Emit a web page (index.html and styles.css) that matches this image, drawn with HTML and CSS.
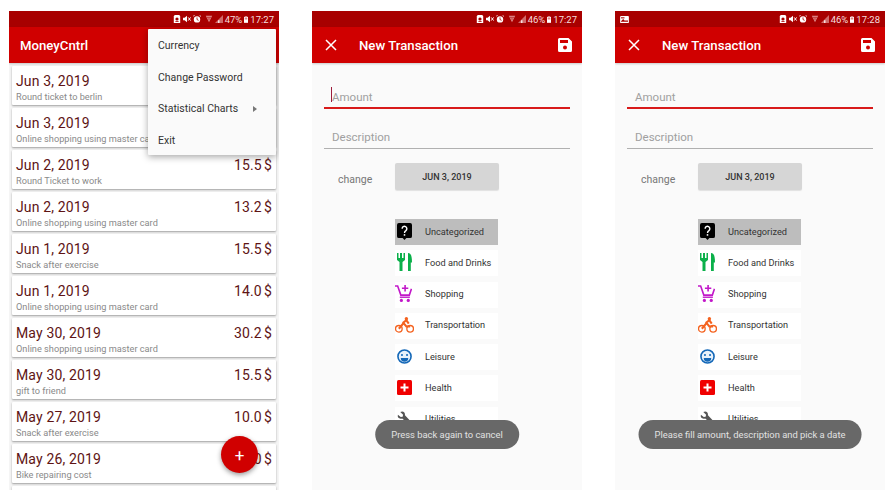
FILE: index.html
```html
<!DOCTYPE html>
<html lang="en">

<head>
    <meta charset="UTF-8">
    <meta name="viewport" content="width=device-width, initial-scale=1.0">
    <title>MoneyCntrl</title>
    <link rel="stylesheet" href="styles.css">
</head>

<body>
    <svg class="defs" width="0" height="0">
        <symbol id="st-lock" viewBox="0 0 10 10"><path d="M2 0h6l1 2v8H1V2z" fill="#fff"/><circle cx="5" cy="5" r="2" fill="#a80000"/><rect x="3" y="7.6" width="4" height="1" fill="#a80000"/></symbol>
        <symbol id="st-mute" viewBox="0 0 10 10"><path d="M0 3.5h2L5 1v8L2 6.500H0z" fill="#fff"/><path d="M6.500 3l3 4M9.500 3l-3 4" stroke="#fff" stroke-width="1.200"/></symbol>
        <symbol id="st-alarm" viewBox="0 0 10 10"><circle cx="5" cy="5.500" r="4" fill="#fff"/><path d="M5 3v2.700l2 1" stroke="#a80000" fill="none"/><path d="M0 2l2-2M10 2L8 0" stroke="#fff"/></symbol>
        <symbol id="st-wifi" viewBox="0 0 10 10"><path d="M1 1h8L5 9z" fill="#e08a8a"/><path d="M2.500 3h5M3.500 5h3" stroke="#a80000" stroke-width=".7"/></symbol>
        <symbol id="st-signal" viewBox="0 0 10 10"><path d="M0 10L10 0v10z" fill="#d06a6a"/><path d="M4 10V6.500h1.500V10z" fill="#fff"/></symbol>
        <symbol id="st-batt" viewBox="0 0 6 10"><rect x="2" width="2" height="1" fill="#fff"/><rect y="1" width="6" height="9" fill="#fff"/><rect x="1" y="2" width="4" height="3" fill="#d88"/></symbol>
        <symbol id="i-close" viewBox="0 0 12 12"><path d="M1 1l10 10M11 1L1 11" stroke="#fff" stroke-width="1.500"/></symbol>
        <symbol id="i-save" viewBox="0 0 14 14"><path d="M1.500 0H10.500L14 3.500V12.500A1.500 1.500 0 0 1 12.500 14H1.500A1.500 1.500 0 0 1 0 12.500V1.500A1.500 1.500 0 0 1 1.500 0z" fill="#fff"/><rect x="2" y="2" width="8" height="3" fill="#d00000"/><circle cx="7" cy="9.500" r="2" fill="#d00000"/></symbol>
        <symbol id="i-help" viewBox="0 0 16 18"><path d="M2 0h12a2 2 0 0 1 2 2v12a2 2 0 0 1-2 2h-4l-2 2-2-2H2a2 2 0 0 1-2-2V2a2 2 0 0 1 2-2z" fill="#000"/><path d="M5.500 6a2.500 2.500 0 1 1 4 2c-1 .7-1.500 1.200-1.500 2.500" fill="none" stroke="#fff" stroke-width="1.500"/><rect x="7.200" y="11.800" width="1.600" height="1.700" fill="#fff"/></symbol>
        <symbol id="i-food" viewBox="0 0 15 18"><path d="M0 0h1.500v5H3V0h2v5h1.500V0H8v7L5.500 9v9h-3V9L0 7z" fill="#0bb04a"/><path d="M11 0c3 0 4 3 4 9.500h-1.200V18H11z" fill="#0bb04a"/></symbol>
        <symbol id="i-cart" viewBox="0 0 16 16"><path d="M0 1h2.500l3 8.500h8l2-6" fill="none" stroke="#c218c9" stroke-width="1.500"/><path d="M9.500 0v6M6.500 3h6" stroke="#c218c9" stroke-width="1.500"/><path d="M4.500 11.500h9.500" stroke="#c218c9" stroke-width="1.300"/><circle cx="6" cy="14.500" r="1.500" fill="#c218c9"/><circle cx="12.500" cy="14.500" r="1.500" fill="#c218c9"/></symbol>
        <symbol id="i-bike" viewBox="0 0 20 17"><circle cx="4" cy="12.500" r="3.500" fill="none" stroke="#f4621f" stroke-width="1.400"/><circle cx="16" cy="12.500" r="3.500" fill="none" stroke="#f4621f" stroke-width="1.400"/><circle cx="12" cy="1.800" r="1.800" fill="#f4621f"/><path d="M4 12.500l5-6 3 3.500h4M8 6.500l4-3 2.500 3.500" fill="none" stroke="#f4621f" stroke-width="2.200"/></symbol>
        <symbol id="i-smile" viewBox="0 0 16 16"><circle cx="8" cy="8" r="7" fill="#e8f2fb" stroke="#1468b8" stroke-width="1.700"/><circle cx="5.300" cy="6.300" r="1.100" fill="#1468b8"/><circle cx="10.700" cy="6.300" r="1.100" fill="#1468b8"/><path d="M4 9.500h8a4 4 0 0 1-8 0z" fill="#1468b8"/></symbol>
        <symbol id="i-health" viewBox="0 0 15 15"><rect width="15" height="15" rx="1.500" fill="#f00000"/><path d="M7.500 3.500v8M3.500 7.500h8" stroke="#fff" stroke-width="2"/></symbol>
        <symbol id="i-wrench" viewBox="0 0 16 16"><path d="M1 4l3 2.500 2-.5.500-2L3.500 1C6-.5 9 1 8.500 4.500L15.500 12l-2.500 2.500-7.500-6.500C2 9 0 6.500 1 4z" fill="#555"/></symbol>
    </svg>

    <!-- transactions list -->
    <section class="phone">
        <div class="status">
            <span class="status-right">
                <svg class="st"><use href="#st-lock"/></svg><svg class="st"><use href="#st-mute"/></svg><svg class="st"><use href="#st-alarm"/></svg><svg class="st st-gap"><use href="#st-wifi"/></svg><svg class="st"><use href="#st-signal"/></svg>
                <span>47%</span><svg class="st-batt"><use href="#st-batt"/></svg><span>17:27</span>
            </span>
        </div>
        <header class="toolbar"><span class="app-title">MoneyCntrl</span></header>
        <div class="list">
            <div class="card"><div class="card-top"><span class="date">Jun 3, 2019</span><span class="amount">15.5 $</span></div><div class="note">Round ticket to berlin</div></div>
            <div class="card"><div class="card-top"><span class="date">Jun 3, 2019</span><span class="amount">15.5 $</span></div><div class="note">Online shopping using master card</div></div>
            <div class="card"><div class="card-top"><span class="date">Jun 2, 2019</span><span class="amount">15.5 $</span></div><div class="note">Round Ticket to work</div></div>
            <div class="card"><div class="card-top"><span class="date">Jun 2, 2019</span><span class="amount">13.2 $</span></div><div class="note">Online shopping using master card</div></div>
            <div class="card"><div class="card-top"><span class="date">Jun 1, 2019</span><span class="amount">15.5 $</span></div><div class="note">Snack after exercise</div></div>
            <div class="card"><div class="card-top"><span class="date">Jun 1, 2019</span><span class="amount">14.0 $</span></div><div class="note">Online shopping using master card</div></div>
            <div class="card"><div class="card-top"><span class="date">May 30, 2019</span><span class="amount">30.2 $</span></div><div class="note">Online shopping using master card</div></div>
            <div class="card"><div class="card-top"><span class="date">May 30, 2019</span><span class="amount">15.5 $</span></div><div class="note">gift to friend</div></div>
            <div class="card"><div class="card-top"><span class="date">May 27, 2019</span><span class="amount">10.0 $</span></div><div class="note">Snack after exercise</div></div>
            <div class="card"><div class="card-top"><span class="date">May 26, 2019</span><span class="amount">15.0 $</span></div><div class="note">Bike repairing cost</div></div>
            <div class="card"></div>
        </div>
        <div class="menu">
            <div class="menu-item">Currency</div>
            <div class="menu-item">Change Password</div>
            <div class="menu-item menu-sub">Statistical Charts<span class="arrow"></span></div>
            <div class="menu-item">Exit</div>
        </div>
        <div class="fab">+</div>
    </section>

    <!-- new transaction, focused amount -->
    <section class="phone phone-form">
        <div class="status">
            <span class="status-right">
                <svg class="st"><use href="#st-lock"/></svg><svg class="st"><use href="#st-mute"/></svg><svg class="st"><use href="#st-alarm"/></svg><svg class="st st-gap"><use href="#st-wifi"/></svg><svg class="st"><use href="#st-signal"/></svg>
                <span>46%</span><svg class="st-batt"><use href="#st-batt"/></svg><span>17:27</span>
            </span>
        </div>
        <header class="toolbar">
            <svg class="close"><use href="#i-close"/></svg>
            <span class="form-title">New Transaction</span>
            <svg class="save"><use href="#i-save"/></svg>
        </header>
        <div class="form">
            <div class="field field-active"><span class="cursor"></span>Amount</div>
            <div class="field">Description</div>
            <div class="date-row"><span class="change">change</span><span class="date-btn">JUN 3, 2019</span></div>
            <div class="cats">
                <div class="cat cat-on"><svg class="cat-icon"><use href="#i-help"/></svg>Uncategorized</div>
                <div class="cat"><svg class="cat-icon icon-food"><use href="#i-food"/></svg>Food and Drinks</div>
                <div class="cat"><svg class="cat-icon icon-cart"><use href="#i-cart"/></svg>Shopping</div>
                <div class="cat"><svg class="cat-icon icon-bike"><use href="#i-bike"/></svg>Transportation</div>
                <div class="cat"><svg class="cat-icon"><use href="#i-smile"/></svg>Leisure</div>
                <div class="cat"><svg class="cat-icon"><use href="#i-health"/></svg>Health</div>
                <div class="cat"><svg class="cat-icon"><use href="#i-wrench"/></svg>Utilities</div>
            </div>
        </div>
        <div class="toast">Press back again to cancel</div>
    </section>

    <!-- new transaction, validation toast -->
    <section class="phone phone-form">
        <div class="status">
            <svg class="st-pic" viewBox="0 0 10 8"><rect width="10" height="8" rx="1" fill="#fff"/><path d="M1 6l2.500-2.500L5 5h4v1.500H1z" fill="#a80000"/><rect x="1" y="1.500" width="4" height="1.200" fill="#a80000"/></svg>
            <span class="status-right">
                <svg class="st"><use href="#st-lock"/></svg><svg class="st"><use href="#st-mute"/></svg><svg class="st"><use href="#st-alarm"/></svg><svg class="st st-gap"><use href="#st-wifi"/></svg><svg class="st"><use href="#st-signal"/></svg>
                <span>46%</span><svg class="st-batt"><use href="#st-batt"/></svg><span>17:28</span>
            </span>
        </div>
        <header class="toolbar">
            <svg class="close"><use href="#i-close"/></svg>
            <span class="form-title">New Transaction</span>
            <svg class="save"><use href="#i-save"/></svg>
        </header>
        <div class="form">
            <div class="field field-red">Amount</div>
            <div class="field">Description</div>
            <div class="date-row"><span class="change">change</span><span class="date-btn">JUN 3, 2019</span></div>
            <div class="cats">
                <div class="cat cat-on"><svg class="cat-icon"><use href="#i-help"/></svg>Uncategorized</div>
                <div class="cat"><svg class="cat-icon icon-food"><use href="#i-food"/></svg>Food and Drinks</div>
                <div class="cat"><svg class="cat-icon icon-cart"><use href="#i-cart"/></svg>Shopping</div>
                <div class="cat"><svg class="cat-icon icon-bike"><use href="#i-bike"/></svg>Transportation</div>
                <div class="cat"><svg class="cat-icon"><use href="#i-smile"/></svg>Leisure</div>
                <div class="cat"><svg class="cat-icon"><use href="#i-health"/></svg>Health</div>
                <div class="cat"><svg class="cat-icon"><use href="#i-wrench"/></svg>Utilities</div>
            </div>
        </div>
        <div class="toast">Please fill amount, description and pick a date</div>
    </section>
</body>

</html>
```

FILE: styles.css
```css
* {
    box-sizing: border-box;
}

body {
    margin: 0;
    padding: 11px 0 0 9px;
    height: 499px;
    overflow: hidden;
    display: flex;
    gap: 33px;
    background: #fff;
    font-family: Roboto, "Liberation Sans", sans-serif;
}

.defs {
    position: absolute;
}

.phone {
    position: relative;
    width: 270px;
    height: 479px;
    overflow: hidden;
    background: #f5f5f5;
    display: flex;
    flex-direction: column;
}

.phone-form {
    background: #fafafa;
}

/* status bar */
.status {
    height: 16px;
    flex: none;
    background: #a80000;
    display: flex;
    align-items: center;
    padding: 0 5px;
    color: #f6dede;
    font-size: 9.5px;
}

.status-right {
    margin-left: auto;
    display: flex;
    align-items: center;
    gap: 2px;
}

.st {
    width: 8px;
    height: 8px;
}

.st-gap {
    margin-left: 2px;
}

.st-batt {
    width: 4px;
    height: 7px;
}

.st-pic {
    width: 9px;
    height: 7px;
}

/* toolbar */
.toolbar {
    height: 36px;
    flex: none;
    background: #d00000;
    color: #fff;
    display: flex;
    align-items: center;
    position: relative;
    box-shadow: 0 1px 2px rgba(0, 0, 0, .2);
}

.app-title {
    margin-left: 11px;
    font-size: 13.2px;
    font-weight: 500;
}

.close {
    width: 12px;
    height: 12px;
    margin-left: 13px;
}

.form-title {
    margin-left: 22px;
    font-size: 13.2px;
    font-weight: 500;
}

.save {
    width: 14px;
    height: 14px;
    margin-left: auto;
    margin-right: 10px;
}

/* transactions */
.list {
    padding: 3px 3px 0;
    display: flex;
    flex-direction: column;
    gap: 3px;
}

.card {
    height: 39px;
    flex: none;
    background: #fff;
    padding: 6px 4px 0;
    border-radius: 1px;
    box-shadow: 0 1px 2px rgba(0, 0, 0, .35);
}

.card-top {
    display: flex;
    justify-content: space-between;
    align-items: center;
    height: 18px;
}

.date,
.amount {
    font-size: 14px;
    letter-spacing: .15px;
    color: #5e1414;
}

.amount {
    word-spacing: -1.5px;
}

.note {
    font-size: 9.2px;
    color: #8a8a8a;
    margin-top: 1px;
    white-space: nowrap;
}

.menu {
    position: absolute;
    top: 18px;
    left: 139px;
    width: 128px;
    height: 126px;
    padding-top: 1px;
    background: #fafafa;
    border-radius: 1px;
    box-shadow: 0 2px 7px rgba(0, 0, 0, .35);
}

.menu-item {
    height: 31.5px;
    padding-left: 10px;
    display: flex;
    align-items: center;
    font-size: 10.5px;
    color: #333;
}

.arrow {
    margin-left: 15px;
    border-left: 4px solid #777;
    border-top: 3px solid transparent;
    border-bottom: 3px solid transparent;
}

.fab {
    position: absolute;
    left: 212px;
    top: 425px;
    width: 37px;
    height: 37px;
    border-radius: 50%;
    background: #d00000;
    color: #fff;
    font-size: 17px;
    display: flex;
    align-items: center;
    justify-content: center;
    box-shadow: 0 2px 5px rgba(0, 0, 0, .4);
}

/* new transaction form */
.form {
    padding: 19px 12px 0;
    display: flex;
    flex-direction: column;
}

.field {
    position: relative;
    height: 27px;
    padding: 8px 0 0 8px;
    font-size: 11.5px;
    color: #a0a0a0;
    border-bottom: 1px solid #b0b0b0;
    margin-bottom: 13px;
}

.field-active,
.field-red {
    border-bottom: 2px solid #d81a1a;
}

.cursor {
    position: absolute;
    left: 7px;
    top: 5px;
    width: 1px;
    height: 15px;
    background: #9c1c3c;
}

.date-row {
    display: flex;
    align-items: center;
    margin-top: 1px;
}

.change {
    width: 71px;
    padding: 6px 0 0 14px;
    font-size: 10.5px;
    color: #777;
}

.date-btn {
    width: 104px;
    height: 27px;
    background: #d6d6d6;
    border-radius: 2px;
    display: flex;
    align-items: center;
    justify-content: center;
    font-size: 9px;
    font-weight: 500;
    color: #333;
    box-shadow: 0 1px 1px rgba(0, 0, 0, .1);
}

.cats {
    margin: 29px 0 0 71px;
    width: 103px;
    display: flex;
    flex-direction: column;
    gap: 5.3px;
}

.cat {
    height: 26px;
    flex: none;
    background: #fff;
    padding: 0 0 2px 2px;
    display: flex;
    align-items: center;
    gap: 13px;
    font-size: 9.2px;
    color: #333;
}

.cat-on {
    background: #bdbdbd;
}

.cat-icon {
    width: 15px;
    height: 17px;
    flex: none;
}

.icon-food {
    height: 18px;
}

.icon-cart {
    width: 17px;
    margin-left: -2px;
}

.icon-bike {
    width: 19px;
    height: 16px;
    margin: 0 -2px;
}

.toast {
    position: absolute;
    top: 409px;
    left: 50%;
    transform: translateX(-50%);
    height: 29px;
    padding: 0 16px;
    border-radius: 15px;
    background: #686868;
    color: #e2e2e2;
    font-size: 9.4px;
    display: flex;
    align-items: center;
    white-space: nowrap;
}
```
